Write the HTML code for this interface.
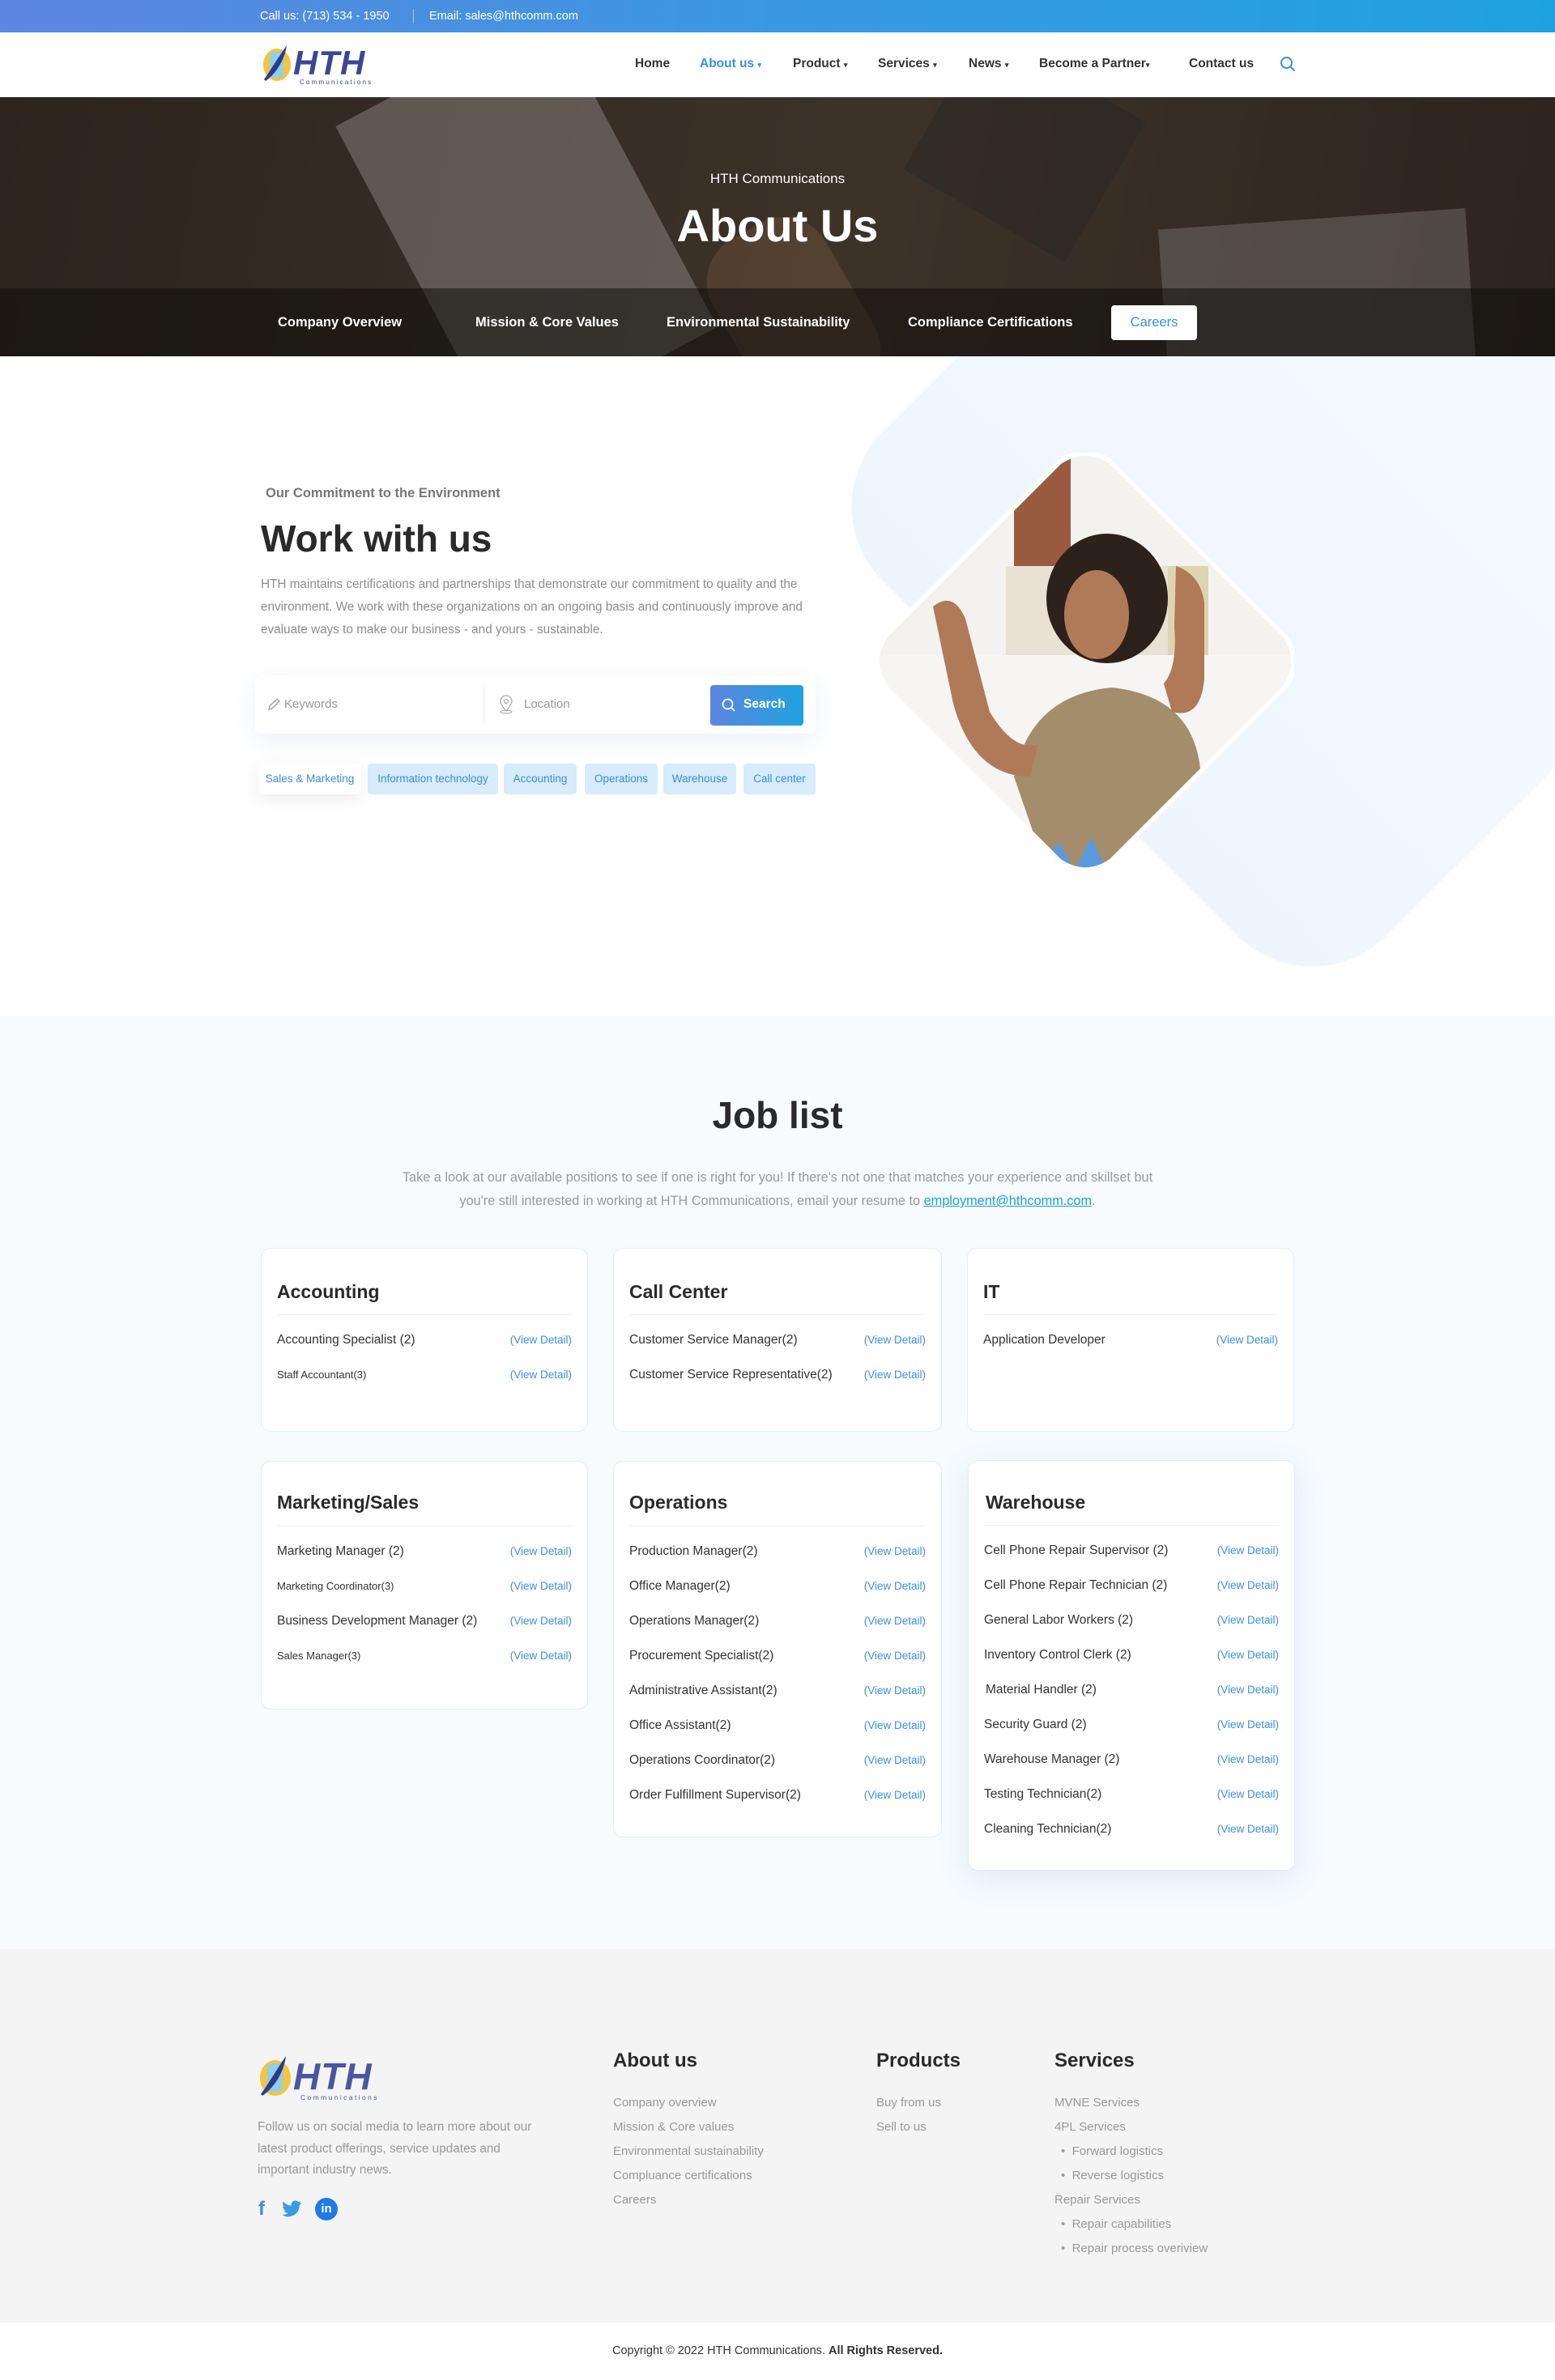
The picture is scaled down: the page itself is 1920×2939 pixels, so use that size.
<!DOCTYPE html>
<html><head><meta charset="utf-8">
<style>
*{margin:0;padding:0;box-sizing:border-box}
body{width:1920px;height:2939px;position:relative;font-family:"Liberation Sans",Arial,sans-serif;background:#fff;overflow:hidden;color:#222}
.a{position:absolute;white-space:nowrap}
.top{position:absolute;left:0;top:0;width:1920px;height:40px;background:linear-gradient(90deg,#5d86e0,#3a98e2 50%,#1ea2df)}
.nav{font-size:15.5px;font-weight:bold;color:#333;top:69px;line-height:20px}
.hero{position:absolute;left:0;top:120px;width:1920px;height:320px;overflow:hidden;background:linear-gradient(100deg,#3b3128 0%,#4a3e33 35%,#54463a 55%,#3a3129 100%)}
.tab{font-size:16.5px;font-weight:bold;color:#fff;top:388px;line-height:20px}
.tag{position:absolute;top:943px;height:38px;line-height:38px;background:#d7ecfd;color:#3c8be0;font-size:13.5px;text-align:center;border-radius:4px}
.card{position:absolute;background:#fff;border:1px solid #dfeef8;border-radius:12px}
.ct{position:absolute;left:19px;font-size:23px;font-weight:bold;color:#2a2a2a;line-height:28px}
.dv{position:absolute;left:19px;right:19px;height:1px;background:#e8f1f8}
.it{position:absolute;left:19px;font-size:15.5px;color:#333;line-height:20px}
.vd{position:absolute;right:19px;font-size:13.5px;color:#3c8ee6;line-height:20px}
.fl{font-size:15px;color:#9a9a9a;line-height:20px}
.fh{font-size:24px;font-weight:bold;color:#2a2a2a;top:2531px;line-height:28px}
</style></head><body>

<div class="top"></div>
<div class="a" style="left:321px;top:10px;font-size:14.5px;color:#fff;line-height:20px">Call us: (713) 534 - 1950</div>
<div class="a" style="left:510px;top:11px;width:1px;height:18px;background:rgba(255,255,255,.5)"></div>
<div class="a" style="left:530px;top:10px;font-size:14.5px;color:#fff;line-height:20px">Email: sales@hthcomm.com</div>

<svg class="a" style="left:322px;top:50px" width="160" height="58" viewBox="0 0 160 58">
 <ellipse cx="20" cy="30" rx="17" ry="20" fill="#f5c242"/>
 <rect x="11" y="14" width="17" height="32" rx="5" fill="#8fd0e8"/>
 <path d="M4 48 C10 40 22 20 32 6 C30 22 20 40 6 50Z" fill="#2c3b8f"/>
 <text x="40" y="42" font-family="Liberation Sans" font-weight="bold" font-style="italic" font-size="42" fill="#3a4796" letter-spacing="1">HTH</text>
 <text x="48" y="54" font-family="Liberation Sans" font-size="8" fill="#3a4796" letter-spacing="2.2">Communications</text>
</svg>

<div class="a nav" style="left:784px">Home</div>
<div class="a nav" style="left:864px;color:#3a8ee6">About us <span style="font-size:9px">▾</span></div>
<div class="a nav" style="left:979px">Product <span style="font-size:9px">▾</span></div>
<div class="a nav" style="left:1084px">Services <span style="font-size:9px">▾</span></div>
<div class="a nav" style="left:1196px">News <span style="font-size:9px">▾</span></div>
<div class="a nav" style="left:1283px">Become a Partner<span style="font-size:9px">▾</span></div>
<div class="a nav" style="left:1468px">Contact us</div>
<svg class="a" style="left:1580px;top:69px" width="20" height="20" viewBox="0 0 20 20"><circle cx="8.5" cy="8.5" r="6.5" fill="none" stroke="#3a8ee6" stroke-width="2"/><path d="M13 13l5 5" stroke="#3a8ee6" stroke-width="2" stroke-linecap="round"/></svg>

<div class="hero">
 <div class="a" style="left:500px;top:-60px;width:300px;height:440px;background:#c9c6c0;opacity:.5;transform:rotate(-28deg)"></div>
 <div class="a" style="left:1150px;top:-40px;width:230px;height:200px;background:#333;opacity:.5;transform:rotate(30deg)"></div>
 <div class="a" style="left:1440px;top:150px;width:380px;height:300px;background:#bfbfbf;opacity:.4;transform:rotate(-4deg)"></div>
 <div class="a" style="left:900px;top:150px;width:160px;height:240px;background:#a07858;opacity:.45;border-radius:60px;transform:rotate(-30deg)"></div>
 <div class="a" style="left:0;top:0;width:1920px;height:320px;background:rgba(20,15,10,.35)"></div>
 <div class="a" style="left:0;top:236px;width:1920px;height:84px;background:rgba(10,10,10,.5)"></div>
</div>
<div class="a" style="left:0;width:1920px;text-align:center;top:210px;font-size:17px;color:#fff;line-height:22px">HTH Communications</div>
<div class="a" style="left:0;width:1920px;text-align:center;top:246px;font-size:56px;font-weight:bold;color:#fff;line-height:66px">About Us</div>
<div class="a tab" style="left:343px">Company Overview</div>
<div class="a tab" style="left:587px">Mission &amp; Core Values</div>
<div class="a tab" style="left:823px">Environmental Sustainability</div>
<div class="a tab" style="left:1121px">Compliance Certifications</div>
<div class="a" style="left:1372px;top:377px;width:106px;height:43px;background:#fff;border-radius:4px;color:#3a8ee6;font-size:16.5px;line-height:43px;text-align:center">Careers</div>

<div class="a" style="left:0;top:440px;width:1920px;height:814px;overflow:hidden">
 <div class="a" style="left:1180px;top:-255px;width:880px;height:880px;border-radius:130px;transform:rotate(45deg);background:linear-gradient(180deg,#f7fbff,#eef5fd)"></div>
</div>
<div class="a" style="left:1082px;top:559px;width:516px;height:516px">
 <svg width="516" height="516" viewBox="0 0 516 516">
  <defs><clipPath id="dc"><path d="M228 14 Q258 -6 288 14 L502 228 Q522 258 502 288 L288 502 Q258 522 228 502 L14 288 Q-6 258 14 228Z"/></clipPath></defs>
  <path d="M226 8 Q258 -14 290 8 L508 226 Q530 258 508 290 L290 508 Q258 530 226 508 L8 290 Q-14 258 8 226Z" fill="#fff"/>
  <g clip-path="url(#dc)">
   <rect width="516" height="516" fill="#f4f2ef"/>
   <rect x="170" y="0" width="70" height="200" fill="#9a5a40"/>
   <rect x="160" y="140" width="230" height="110" fill="#e8e1d4"/>
   <rect x="360" y="140" width="50" height="130" fill="#dcd5b0"/>
   <rect x="0" y="250" width="516" height="270" fill="#f6f5f3"/>
   <path d="M170 400 Q190 300 290 290 Q390 300 400 390 L400 516 L210 516Z" fill="#a38d6b"/>
   <ellipse cx="285" cy="180" rx="75" ry="80" fill="#2c211b"/>
   <ellipse cx="272" cy="200" rx="40" ry="55" fill="#b07a58"/>
   <path d="M70 190 Q95 170 110 205 L140 320 Q170 370 200 360 L190 400 Q120 400 95 310Z" fill="#b07a58"/>
   <path d="M370 140 Q400 150 405 185 L405 280 Q400 330 365 320 L355 285 Q372 265 368 215Z" fill="#b07a58"/>
   <path d="M205 516 L225 480 L245 516 L265 475 L285 516Z" fill="#5a9be0"/>
  </g>
 </svg>
</div>

<div class="a" style="left:328px;top:599px;font-size:16.5px;font-weight:bold;color:#777;line-height:20px">Our Commitment to the Environment</div>
<div class="a" style="left:322px;top:637px;font-size:46px;font-weight:bold;color:#2a2a2a;line-height:56px">Work with us</div>
<div class="a" style="left:322px;top:708px;width:672px;white-space:normal;font-size:15.3px;color:#8d8d8d;line-height:28px">HTH maintains certifications and partnerships that demonstrate our commitment to quality and the environment. We work with these organizations on an ongoing basis and continuously improve and evaluate ways to make our business - and yours - sustainable.</div>

<div class="a" style="left:315px;top:834px;width:692px;height:72px;background:#fff;border-radius:6px;box-shadow:0 8px 30px rgba(80,130,200,.12)"></div>
<svg class="a" style="left:329px;top:861px" width="18" height="18" viewBox="0 0 18 18"><path d="M3 15 L4 11 L13 2 L16 5 L7 14Z M3 15 L7 14" fill="none" stroke="#999" stroke-width="1.3"/></svg>
<div class="a" style="left:351px;top:861px;font-size:15px;color:#999;line-height:18px">Keywords</div>
<div class="a" style="left:597px;top:845px;width:1px;height:50px;background:#eee"></div>
<svg class="a" style="left:614px;top:858px" width="22" height="24" viewBox="0 0 22 24"><path d="M11 20 C5 13 4 10 4 8 A7 7 0 0 1 18 8 C18 10 17 13 11 20Z" fill="none" stroke="#aaa" stroke-width="1.3"/><circle cx="11" cy="8" r="2.5" fill="none" stroke="#aaa" stroke-width="1.3"/><ellipse cx="11" cy="21" rx="7" ry="1.8" fill="none" stroke="#aaa" stroke-width="1.1"/></svg>
<div class="a" style="left:647px;top:861px;font-size:15px;color:#999;line-height:18px">Location</div>
<div class="a" style="left:877px;top:846px;width:115px;height:50px;border-radius:4px;background:linear-gradient(90deg,#5d86e0,#1ea2df)"></div>
<svg class="a" style="left:890px;top:861px" width="20" height="20" viewBox="0 0 20 20"><circle cx="8.5" cy="8.5" r="6" fill="none" stroke="#fff" stroke-width="1.8"/><path d="M13 13l4 4" stroke="#fff" stroke-width="1.8"/></svg>
<div class="a" style="left:918px;top:861px;font-size:15.5px;font-weight:bold;color:#fff;line-height:18px">Search</div>

<div class="tag" style="left:319px;width:127px;background:#fff;box-shadow:0 6px 20px rgba(0,0,0,.08)">Sales &amp; Marketing</div>
<div class="tag" style="left:454px;width:161px">Information technology</div>
<div class="tag" style="left:622px;width:90px">Accounting</div>
<div class="tag" style="left:722px;width:90px">Operations</div>
<div class="tag" style="left:819px;width:90px">Warehouse</div>
<div class="tag" style="left:918px;width:89px">Call center</div>

<div class="a" style="left:0;top:1254px;width:1920px;height:1153px;background:#f7fbfe"></div>
<div class="a" style="left:0;width:1920px;text-align:center;top:1349px;font-size:46px;font-weight:bold;color:#2a2a2a;line-height:56px">Job list</div>
<div class="a" style="left:0;width:1920px;text-align:center;top:1440px;font-size:16.3px;color:#999;line-height:29px;white-space:normal">Take a look at our available positions to see if one is right for you! If there's not one that matches your experience and skillset but<br>you're still interested in working at HTH Communications, email your resume to <span style="color:#1e9ee0;text-decoration:underline">employment@hthcomm.com</span>.</div>

<div class="card" style="left:322px;top:1541px;width:404px;height:227px">
 <div class="ct" style="top:39px">Accounting</div><div class="dv" style="top:81px"></div>
 <div class="it" style="top:103px">Accounting Specialist (2)</div><div class="vd" style="top:103px">(View Detail)</div>
 <div class="it" style="top:146px;font-size:13px">Staff Accountant(3)</div><div class="vd" style="top:146px">(View Detail)</div>
</div>
<div class="card" style="left:757px;top:1541px;width:406px;height:227px">
 <div class="ct" style="top:39px">Call Center</div><div class="dv" style="top:81px"></div>
 <div class="it" style="top:103px">Customer Service Manager(2)</div><div class="vd" style="top:103px">(View Detail)</div>
 <div class="it" style="top:146px">Customer Service Representative(2)</div><div class="vd" style="top:146px">(View Detail)</div>
</div>
<div class="card" style="left:1194px;top:1541px;width:404px;height:227px">
 <div class="ct" style="top:39px">IT</div><div class="dv" style="top:81px"></div>
 <div class="it" style="top:103px">Application Developer</div><div class="vd" style="top:103px">(View Detail)</div>
</div>

<div class="card" style="left:322px;top:1804px;width:404px;height:307px">
 <div class="ct" style="top:36px">Marketing/Sales</div><div class="dv" style="top:79px"></div>
 <div class="it" style="top:101px">Marketing Manager (2)</div><div class="vd" style="top:101px">(View Detail)</div>
 <div class="it" style="top:144px;font-size:13px">Marketing Coordinator(3)</div><div class="vd" style="top:144px">(View Detail)</div>
 <div class="it" style="top:187px">Business Development Manager (2)</div><div class="vd" style="top:187px">(View Detail)</div>
 <div class="it" style="top:230px;font-size:13px">Sales Manager(3)</div><div class="vd" style="top:230px">(View Detail)</div>
</div>
<div class="card" style="left:757px;top:1804px;width:406px;height:465px">
 <div class="ct" style="top:36px">Operations</div><div class="dv" style="top:79px"></div>
 <div class="it" style="top:101px">Production Manager(2)</div><div class="vd" style="top:101px">(View Detail)</div>
 <div class="it" style="top:144px">Office Manager(2)</div><div class="vd" style="top:144px">(View Detail)</div>
 <div class="it" style="top:187px">Operations Manager(2)</div><div class="vd" style="top:187px">(View Detail)</div>
 <div class="it" style="top:230px">Procurement Specialist(2)</div><div class="vd" style="top:230px">(View Detail)</div>
 <div class="it" style="top:273px">Administrative Assistant(2)</div><div class="vd" style="top:273px">(View Detail)</div>
 <div class="it" style="top:316px">Office Assistant(2)</div><div class="vd" style="top:316px">(View Detail)</div>
 <div class="it" style="top:359px">Operations Coordinator(2)</div><div class="vd" style="top:359px">(View Detail)</div>
 <div class="it" style="top:402px">Order Fulfillment Supervisor(2)</div><div class="vd" style="top:402px">(View Detail)</div>
</div>
<div class="card" style="left:1195px;top:1803px;width:404px;height:507px;box-shadow:0 10px 40px rgba(60,100,150,.12)">
 <div class="ct" style="top:37px;left:21px">Warehouse</div><div class="dv" style="top:79px"></div>
 <div class="it" style="top:101px">Cell Phone Repair Supervisor (2)</div><div class="vd" style="top:101px">(View Detail)</div>
 <div class="it" style="top:144px">Cell Phone Repair Technician (2)</div><div class="vd" style="top:144px">(View Detail)</div>
 <div class="it" style="top:187px">General Labor Workers (2)</div><div class="vd" style="top:187px">(View Detail)</div>
 <div class="it" style="top:230px">Inventory Control Clerk (2)</div><div class="vd" style="top:230px">(View Detail)</div>
 <div class="it" style="top:273px;left:21px">Material Handler (2)</div><div class="vd" style="top:273px">(View Detail)</div>
 <div class="it" style="top:316px">Security Guard (2)</div><div class="vd" style="top:316px">(View Detail)</div>
 <div class="it" style="top:359px">Warehouse Manager (2)</div><div class="vd" style="top:359px">(View Detail)</div>
 <div class="it" style="top:402px">Testing Technician(2)</div><div class="vd" style="top:402px">(View Detail)</div>
 <div class="it" style="top:445px">Cleaning Technician(2)</div><div class="vd" style="top:445px">(View Detail)</div>
</div>

<div class="a" style="left:0;top:2407px;width:1920px;height:461px;background:#f4f4f4"></div>
<svg class="a" style="left:318px;top:2533px" width="180" height="64" viewBox="0 0 180 64">
 <ellipse cx="22" cy="33" rx="19" ry="22" fill="#f5c242"/>
 <rect x="12" y="15" width="19" height="35" rx="5" fill="#8fd0e8"/>
 <path d="M4 53 C11 44 24 22 35 6 C33 24 22 44 6 55Z" fill="#2c3b8f"/>
 <text x="44" y="47" font-family="Liberation Sans" font-weight="bold" font-style="italic" font-size="46" fill="#4a56a0" letter-spacing="1">HTH</text>
 <text x="53" y="60" font-family="Liberation Sans" font-size="8.5" fill="#4a56a0" letter-spacing="2.4">Communications</text>
</svg>
<div class="a" style="left:318px;top:2614px;width:362px;white-space:normal;font-size:15.3px;color:#999;line-height:26.5px">Follow us on social media to learn more about our latest product offerings, service updates and important industry news.</div>
<div class="a" style="left:319px;top:2714px;font-size:24px;font-weight:bold;color:#3a8ee6;line-height:28px">f</div>
<svg class="a" style="left:347px;top:2717px" width="26" height="22" viewBox="0 0 24 20"><path d="M23 2.5c-.8.4-1.7.6-2.6.7.9-.6 1.6-1.4 2-2.5-.9.5-1.9.9-2.9 1.1A4.5 4.5 0 0 0 11.8 6C8 5.8 4.7 4 2.5 1.3 1.3 3.4 2 6 4 7.4c-.7 0-1.4-.2-2-.6 0 2.2 1.6 4.1 3.6 4.5-.7.2-1.4.2-2 .1.6 1.8 2.3 3.1 4.2 3.1A9 9 0 0 1 1 16.4 12.8 12.8 0 0 0 21 5.6c.9-.7 1.6-1.5 2-2.4z" fill="#3a9be6"/></svg>
<div class="a" style="left:389px;top:2714px;width:28px;height:28px;border-radius:50%;background:#1e7be6;color:#fff;font-size:15px;font-weight:bold;text-align:center;line-height:28px">in</div>

<div class="a fh" style="left:757px">About us</div>
<div class="a fl" style="left:757px;top:2587px">Company overview</div>
<div class="a fl" style="left:757px;top:2617px">Mission &amp; Core values</div>
<div class="a fl" style="left:757px;top:2647px">Environmental sustainability</div>
<div class="a fl" style="left:757px;top:2677px">Compluance certifications</div>
<div class="a fl" style="left:757px;top:2707px">Careers</div>

<div class="a fh" style="left:1082px">Products</div>
<div class="a fl" style="left:1082px;top:2587px">Buy from us</div>
<div class="a fl" style="left:1082px;top:2617px">Sell to us</div>

<div class="a fh" style="left:1302px">Services</div>
<div class="a fl" style="left:1302px;top:2587px">MVNE Services</div>
<div class="a fl" style="left:1302px;top:2617px">4PL Services</div>
<div class="a fl" style="left:1310px;top:2647px">•&nbsp;&nbsp;Forward logistics</div>
<div class="a fl" style="left:1310px;top:2677px">•&nbsp;&nbsp;Reverse logistics</div>
<div class="a fl" style="left:1302px;top:2707px">Repair Services</div>
<div class="a fl" style="left:1310px;top:2737px">•&nbsp;&nbsp;Repair capabilities</div>
<div class="a fl" style="left:1310px;top:2767px">•&nbsp;&nbsp;Repair process overiview</div>

<div class="a" style="left:0;width:1920px;text-align:center;top:2893px;font-size:14.5px;color:#333;line-height:20px">Copyright © 2022 HTH Communications. <b>All Rights Reserved.</b></div>
</body></html>
